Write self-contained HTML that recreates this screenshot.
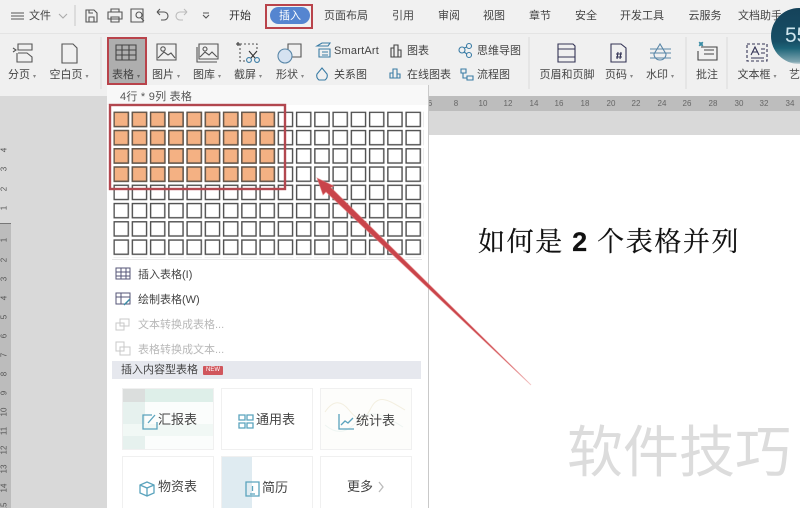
<!DOCTYPE html>
<html lang="zh"><head><meta charset="utf-8"><style>
html,body{margin:0;padding:0;width:800px;height:508px;overflow:hidden;background:#fff}
body{position:relative;font-family:"Liberation Sans","Noto Sans CJK SC",sans-serif;color:#444}
.t{position:absolute;white-space:nowrap;font-size:11px;line-height:14px;transform:translateX(-50%)}
.l{position:absolute;white-space:nowrap;font-size:11px;line-height:14px}
.b{position:absolute}
svg{position:absolute;left:0;top:0}
.card{position:absolute;width:92px;background:#fff;border:1px solid #f0f0f0;box-sizing:border-box}
.rn{position:absolute;font-size:8px;color:#666;line-height:10px;transform:translateX(-50%)}
.vn{position:absolute;left:0;width:9px;text-align:center;font-size:8px;line-height:8px;color:#555;transform:rotate(-90deg)}
</style></head><body>
<div class="b" style="left:0;top:0;width:800px;height:33px;background:#f1f1f1"></div>
<div class="b" style="left:0;top:33px;width:800px;height:63px;background:#f0f0f0;border-top:1px solid #e4e4e4;box-sizing:border-box"></div>
<div class="b" style="left:0;top:96px;width:800px;height:412px;background:#d9d9d9"></div>
<div class="b" style="left:428px;top:96px;width:372px;height:15px;background:#bdbdbd"></div>
<div class="b" style="left:428px;top:135px;width:372px;height:373px;background:#fff"></div>
<div class="b" style="left:0;top:223px;width:11px;height:285px;background:#bcbcbc;border-top:1px solid #777;box-sizing:border-box"></div>

<span class="t" style="left:40px;top:9px">文件</span>
<span class="t" style="left:240px;top:9px;color:#333">开始</span>
<span class="t" style="left:346px;top:9px">页面布局</span>
<span class="t" style="left:403px;top:9px">引用</span>
<span class="t" style="left:449px;top:9px">审阅</span>
<span class="t" style="left:494px;top:9px">视图</span>
<span class="t" style="left:540px;top:9px">章节</span>
<span class="t" style="left:586px;top:9px">安全</span>
<span class="t" style="left:642px;top:9px">开发工具</span>
<span class="t" style="left:705px;top:9px">云服务</span>
<span class="t" style="left:760px;top:9px">文档助手</span>

<div class="b" style="left:265px;top:4px;width:48px;height:25px;border:2px solid #b9434b;box-sizing:border-box"></div>
<div class="b" style="left:270px;top:7px;width:40px;height:17px;border-radius:9px;background:#5585d0"></div>
<span class="t" style="left:290px;top:9px;color:#fff">插入</span>

<div class="b" style="left:107px;top:37px;width:40px;height:48px;background:#aeaeae;border:2px solid #b9434b;box-sizing:border-box"></div>

<span class="t" style="left:22px;top:68px">分页 <span style="font-size:6px;color:#888">▾</span></span>
<span class="t" style="left:69px;top:68px">空白页 <span style="font-size:6px;color:#888">▾</span></span>
<span class="t" style="left:126px;top:68px">表格 <span style="font-size:6px;color:#666">▾</span></span>
<span class="t" style="left:166px;top:68px">图片 <span style="font-size:6px;color:#888">▾</span></span>
<span class="t" style="left:207px;top:68px">图库 <span style="font-size:6px;color:#888">▾</span></span>
<span class="t" style="left:248px;top:68px">截屏 <span style="font-size:6px;color:#888">▾</span></span>
<span class="t" style="left:290px;top:68px">形状 <span style="font-size:6px;color:#888">▾</span></span>
<span class="l" style="left:334px;top:44px;letter-spacing:.2px">SmartArt</span>
<span class="l" style="left:334px;top:68px">关系图</span>
<span class="l" style="left:407px;top:44px">图表</span>
<span class="l" style="left:407px;top:68px">在线图表</span>
<span class="l" style="left:477px;top:44px">思维导图</span>
<span class="l" style="left:477px;top:68px">流程图</span>
<span class="t" style="left:567px;top:68px">页眉和页脚</span>
<span class="t" style="left:619px;top:68px">页码 <span style="font-size:6px;color:#888">▾</span></span>
<span class="t" style="left:660px;top:68px">水印 <span style="font-size:6px;color:#888">▾</span></span>
<span class="t" style="left:707px;top:68px">批注</span>
<span class="t" style="left:757px;top:68px">文本框 <span style="font-size:6px;color:#888">▾</span></span>
<span class="l" style="left:789px;top:68px">艺</span>

<svg width="800" height="508" viewBox="0 0 800 508" fill="none" stroke="#555" stroke-width="1.1">
<path d="M11 13h13M11 16h13M11 19h13"/>
<path d="M59 14l4 4 4-4" stroke="#aaa"/>
<path d="M75 5v21" stroke="#ccc"/>
<path d="M86 10h8l3 3v9H86zM89 22v-5h5v5M89 10v3h4"/>
<path d="M111 12v-3h8v3M108 12h14v7h-14zM111 17h8v5h-8z"/>
<path d="M131 9h12v13h-12zM141 18l3 3"/><circle cx="139" cy="15" r="3"/>
<path d="M157 12l3-3M157 12l3 3M157 12h7a4 4 0 0 1 0 8h-3"/>
<path d="M187 12l-3-3M187 12l-3 3M187 12h-7a4 4 0 0 0 0 8h3" stroke="#bbb"/>
<path d="M203 13h6M203 15l3 3 3-3"/>
<path d="M18 44h14v6H18zM18 53h9l5 4v5H17v-9M13 48l3 2-3 2" />
<path d="M62 44h11l4 4v15H62z"/>
<path d="M116 45h20v15h-20zM116 50h20M116 55h20M122 45v15M129 45v15" stroke="#444"/>
<path d="M157 44h19v16h-19zM158 58l6-6 4 3 3-2 4 5"/><circle cx="163" cy="49" r="2.2"/>
<path d="M199 44h19v15h-19zM197 47v15h20M200 57l5-5 4 3 3-3 5 5"/><circle cx="205" cy="49" r="2"/>
<path d="M240 44h17v5M240 44v17h5" stroke-dasharray="2 2"/>
<path d="M238 42v4M236 44h4" stroke="#333"/>
<circle cx="249" cy="60" r="2.4" stroke="#3a7ca5"/><circle cx="257" cy="60" r="2.4" stroke="#3a7ca5"/>
<path d="M251 58l6-7M255 58l-6-7" stroke="#333"/>
<path d="M288 44h13v13h-13z"/>
<circle cx="285" cy="56" r="7" fill="#d5e2f1" stroke="#5a87a8"/>
<path d="M317 46l5-3h8l-2 3zM319 49h11v8h-11zM322 52h6M322 55h6" stroke="#3a7ca5"/>
<path d="M322 68l5 6a5 5 0 0 1-2 6h-6a5 5 0 0 1-2-6z" stroke="#3a7ca5"/>
<path d="M391 48h3v9h-3zM394 45h4v12h-4zM398 50h3v7h-3z" stroke="#444"/>
<path d="M390 78v-5h3v5zM393 78v-9h4v9zM397 78v-4h3v4z" stroke="#3a7ca5"/>
<circle cx="462" cy="50" r="3" stroke="#3a7ca5"/><circle cx="469" cy="46" r="2.5" stroke="#3a7ca5"/><circle cx="469" cy="55" r="2.5" stroke="#3a7ca5"/>
<path d="M464 48l3-1M464 52l3 2" stroke="#3a7ca5"/>
<path d="M461 69h5v4h-5zM467 76h6v4h-6zM463 73v5h4" stroke="#3a7ca5"/>
<path d="M558 44h15l2 2v16h-17zM558 49h17M558 57h17" stroke="#335"/>
<path d="M611 44h10l5 4v14h-15zM616 54h6M616 57h6M618 52l-1 7M621 52l-1 7" stroke="#335"/>
<path d="M650 49h21M650 53h21M650 58h21" stroke="#5a87a8"/>
<path d="M660 44l-6 10a6 6 0 0 0 12 0z" stroke="#5a87a8"/>
<path d="M701 47h16v13h-19v-9M704 50h10M704 54h10" stroke="#444"/>
<path d="M699 44h4M701 42v4M699 42l4 4M703 42l-4 4" stroke="#3a8ca5"/>
<path d="M747 44h20v17h-20z" stroke-dasharray="3 2" stroke="#335"/>
<path d="M751 55l4-8 4 8M752.5 52h5M761 49h4M761 53h4M751 58h13" stroke="#335"/>
<g stroke="#dcdcdc"><path d="M101 37v52M529 37v52M686 37v52M727 37v52"/></g>
</svg>

<span class="rn" style="left:430px;top:99px">6</span>
<span class="rn" style="left:456px;top:99px">8</span>
<span class="rn" style="left:483px;top:99px">10</span>
<span class="rn" style="left:508px;top:99px">12</span>
<span class="rn" style="left:534px;top:99px">14</span>
<span class="rn" style="left:559px;top:99px">16</span>
<span class="rn" style="left:585px;top:99px">18</span>
<span class="rn" style="left:611px;top:99px">20</span>
<span class="rn" style="left:636px;top:99px">22</span>
<span class="rn" style="left:662px;top:99px">24</span>
<span class="rn" style="left:687px;top:99px">26</span>
<span class="rn" style="left:713px;top:99px">28</span>
<span class="rn" style="left:739px;top:99px">30</span>
<span class="rn" style="left:764px;top:99px">32</span>
<span class="rn" style="left:790px;top:99px">34</span>

<span class="vn" style="top:146px">4</span><span class="vn" style="top:165px">3</span><span class="vn" style="top:185px">2</span><span class="vn" style="top:204px">1</span>
<span class="vn" style="top:236px">1</span><span class="vn" style="top:256px">2</span><span class="vn" style="top:275px">3</span><span class="vn" style="top:294px">4</span><span class="vn" style="top:313px">5</span><span class="vn" style="top:332px">6</span><span class="vn" style="top:351px">7</span><span class="vn" style="top:370px">8</span><span class="vn" style="top:389px">9</span><span class="vn" style="top:408px">10</span><span class="vn" style="top:427px">11</span><span class="vn" style="top:446px">12</span><span class="vn" style="top:465px">13</span><span class="vn" style="top:484px">14</span><span class="vn" style="top:503px">15</span>

<!-- Popup -->
<div class="b" style="left:107px;top:85px;width:322px;height:423px;background:#fff;border-right:1px solid #c9c9c9;box-sizing:border-box"></div>
<div class="b" style="left:107px;top:85px;width:321px;height:20px;background:#f8f8f8"></div>
<span class="l" style="left:120px;top:90px;font-size:11px;letter-spacing:.25px;color:#555">4行 * 9列 表格</span>

<!-- Cards -->
<div class="card" style="left:122px;top:388px;height:62px;background:linear-gradient(90deg,#e6f1ee 0,#e6f1ee 22px,#fbfdfc 22px);overflow:hidden"><div style="height:13px;background:linear-gradient(90deg,#dbdedd 22px,#deefe9 22px)"></div><div style="height:12px;margin-top:22px;background:#f1f8f5"></div></div>
<div class="card" style="left:221px;top:388px;height:62px"></div>
<div class="card" style="left:320px;top:388px;height:62px;background:#fdfdfb"></div>
<div class="card" style="left:122px;top:456px;height:52px;border-bottom:0"></div>
<div class="card" style="left:221px;top:456px;height:52px;border-bottom:0;background:linear-gradient(90deg,#dfebf1 0,#dfebf1 30px,#fff 30px)"></div>
<div class="card" style="left:320px;top:456px;height:52px;border-bottom:0"></div>

<svg width="800" height="508" viewBox="0 0 800 508" fill="none">
<defs>
<pattern id="c" x="113.4" y="111.6" width="18.25" height="18.25" patternUnits="userSpaceOnUse"><rect x=".7" y=".7" width="14.2" height="14.2" fill="#fff" stroke="#4f4f4f" stroke-width="1.4"/></pattern>
<pattern id="o" x="113.4" y="111.6" width="18.25" height="18.25" patternUnits="userSpaceOnUse"><rect x=".7" y=".7" width="14.2" height="14.2" fill="#f4b183" stroke="#645548" stroke-width="1.4"/></pattern>
</defs>
<rect x="113.4" y="111.6" width="310.25" height="146" fill="url(#c)"/>
<rect x="113.4" y="111.6" width="164.25" height="73" fill="url(#o)"/>
<rect x="110" y="105" width="175" height="84" stroke="#b2474f" stroke-width="2.4"/>
<path d="M112 259.500h310" stroke="#e6e6e6"/>
<!-- arrow -->
<path d="M317 178L334 186L331 187.500L531 385L326 192L323 195Z" fill="#c9444a" stroke="#e88a8a" stroke-opacity=".45" stroke-width="1"/>
<!-- menu icons -->
<g stroke="#557" stroke-width="1"><path d="M116 268h14v11h-14zM116 272h14M116 276h14M121 268v11M126 268v11"/>
<path d="M116 293h14v11h-14zM116 297h14M121 293v11" /><path d="M124 305l6-6" stroke="#3a8ca5" stroke-width="1.4"/></g>
<g stroke="#c8c8c8" stroke-width="1"><path d="M120 319h9v7h-9zM116 323h8v7h-8z"/><path d="M116 342h8v9h-8zM120 347h10v8h-10z"/></g>
<!-- card decorations -->
<path d="M325 412c8-12 16-12 24-2s14 14 22-2 20-6 34 2" stroke="#f3efe0"/>
<path d="M325 425c12 10 22 8 32-4s24-8 46 6" stroke="#eef5f2"/>
<!-- card icons -->
<g stroke="#5aa3bd" stroke-width="1.3">
<path d="M152 415h-9v14h14v-7M148 423l7-8"/>
<path d="M239 415h6v5h-6zM247 415h6v5h-6zM239 423h6v5h-6zM247 423h6v5h-6z"/>
<path d="M339 414v15h15M341 425l4-4 3 2 5-5"/>
<path d="M147 482l-7 3v8l7 3 7-3v-8zM140 485l7 3 7-3M147 488v8"/>
<path d="M246 482h13v14h-13zM250 494h5M252.500 486v5"/>
</g>
<path d="M379 482l4 5-4 5" stroke="#bbb" stroke-width="1.3"/>
</svg>

<span class="l" style="left:138px;top:268px;color:#444">插入表格(I)</span>
<span class="l" style="left:138px;top:293px;color:#444">绘制表格(W)</span>
<span class="l" style="left:138px;top:318px;color:#b8b8b8">文本转换成表格...</span>
<span class="l" style="left:138px;top:343px;color:#b8b8b8">表格转换成文本...</span>
<div class="b" style="left:112px;top:361px;width:309px;height:18px;background:#e6e8ee"></div>
<span class="l" style="left:121px;top:363px">插入内容型表格</span>
<div class="b" style="left:203px;top:366px;width:20px;height:9px;background:#d0565c;color:#fff;font-size:6px;line-height:9px;text-align:center;border-radius:1px">NEW</div>

<span class="l" style="left:158px;top:412px;font-size:13px;line-height:16px">汇报表</span>
<span class="l" style="left:256px;top:412px;font-size:13px;line-height:16px">通用表</span>
<span class="l" style="left:356px;top:413px;font-size:13px;line-height:16px">统计表</span>
<span class="l" style="left:158px;top:479px;font-size:13px;line-height:16px">物资表</span>
<span class="l" style="left:262px;top:480px;font-size:13px;line-height:16px">简历</span>
<span class="l" style="left:347px;top:479px;font-size:13px;line-height:16px">更多</span>

<!-- document text -->
<span class="l" style="left:478px;top:226px;font-size:27px;line-height:32px;color:#111;font-family:'Liberation Serif','Noto Serif CJK SC',serif;letter-spacing:1.6px;-webkit-text-stroke:.2px #111">如何是 <b style="font-family:'Liberation Sans',sans-serif">2</b> 个表格并列</span>
<span class="l" style="left:567px;top:416px;font-size:56px;line-height:66px;color:#dcdcdc;font-family:'Noto Sans CJK SC',sans-serif">软件技巧</span>

<!-- badge -->
<div class="b" style="left:771px;top:8px;width:56px;height:56px;border-radius:50%;background:linear-gradient(180deg,#15425a 0,#174f66 60%,#1d6478 72%,#7fa5b0 96%,#c8d6da 100%);overflow:hidden"></div>
<span class="l" style="left:785px;top:24px;font-size:21px;line-height:24px;color:#cfe6ee">55</span>
</body></html>
